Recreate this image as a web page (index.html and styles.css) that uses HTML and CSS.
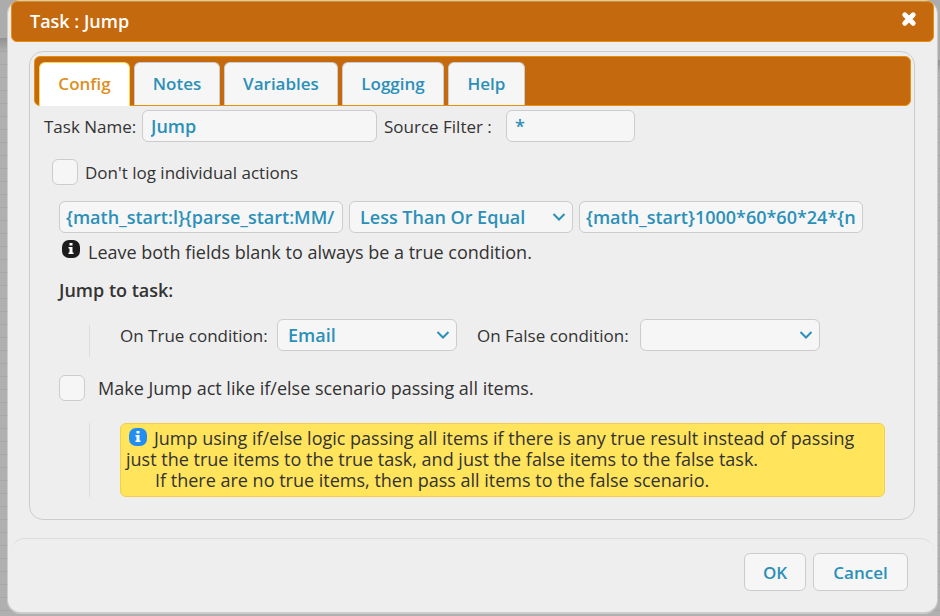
FILE: index.html
```html
<!DOCTYPE html>
<html lang="en">
<head>
<meta charset="utf-8">
<title>Task : Jump</title>
<link rel="stylesheet" href="styles.css">
</head>
<body>
<main class="dialog" role="dialog" aria-labelledby="dialog-title">
  <header class="titlebar">
    <h1 id="dialog-title">Task : Jump</h1>
    <button class="close" type="button" aria-label="Close">
      <svg viewBox="0 0 16 16" width="16" height="16"><path d="M3.800 3.800 12.200 12.200M12.200 3.800 3.800 12.200"/></svg>
    </button>
  </header>
  <form class="content" id="task-form">
    <div class="tabs">
      <nav class="tab-nav">
        <a class="tab tab-active" href="#config">Config</a>
        <a class="tab tab-notes" href="#notes">Notes</a>
        <a class="tab tab-variables" href="#variables">Variables</a>
        <a class="tab tab-logging" href="#logging">Logging</a>
        <a class="tab tab-help" href="#help">Help</a>
      </nav>
      <section class="panel" id="config">
        <div class="row names">
          <label for="task-name">Task Name:</label>
          <input class="field" id="task-name" type="text" value="Jump">
          <label for="source-filter">Source Filter :</label>
          <input class="field" id="source-filter" type="text" value="*">
        </div>
        <div class="row check check-log">
          <input id="no-log" type="checkbox">
          <label for="no-log">Don't log individual actions</label>
        </div>
        <div class="row expression">
          <input class="field" type="text" aria-label="Left value" value="{math_start:l}{parse_start:MM/">
          <span class="select">
            <select class="field" aria-label="Comparison"><option>Less Than Or Equal</option></select>
            <svg viewBox="0 0 14 10" width="14" height="10"><path d="M1.500 2 7 7.500 12.500 2"/></svg>
          </span>
          <input class="field" type="text" aria-label="Right value" value="{math_start}1000*60*60*24*{now}">
        </div>
        <p class="hint">
          <svg class="info info-dark" viewBox="0 0 18 18" width="18" height="18"><rect width="18" height="18" rx="7"/><path d="M7.500 3h3v2.500h-3zM6.500 7h4v5.500h1V14h-5v-1.500h1v-4h-1z"/></svg>
          <span>Leave both fields blank to always be a true condition.</span>
        </p>
        <h2>Jump to task:</h2>
        <div class="nested targets">
          <label for="on-true">On True condition:</label>
          <span class="select">
            <select class="field" id="on-true"><option>Email</option></select>
            <svg viewBox="0 0 14 10" width="14" height="10"><path d="M1.500 2 7 7.500 12.500 2"/></svg>
          </span>
          <label for="on-false">On False condition:</label>
          <span class="select">
            <select class="field" id="on-false"><option></option></select>
            <svg viewBox="0 0 14 10" width="14" height="10"><path d="M1.500 2 7 7.500 12.500 2"/></svg>
          </span>
        </div>
        <div class="row check check-else">
          <input id="if-else" type="checkbox">
          <label for="if-else">Make Jump act like if/else scenario passing all items.</label>
        </div>
        <div class="nested">
          <p class="notice"><svg class="info info-blue" viewBox="0 0 18 18" width="18" height="18"><rect width="18" height="18" rx="7"/><path d="M7.500 3h3v2.500h-3zM6.500 7h4v5.500h1V14h-5v-1.500h1v-4h-1z"/></svg>Jump using if/else logic passing all items if there is any true result instead of passing<br>just the true items to the true task, and just the false items to the false task.<br><span class="indent">If there are no true items, then pass all items to the false scenario.</span></p>
        </div>
      </section>
    </div>
  </form>
  <footer class="actions">
    <button class="button" type="submit" form="task-form">OK</button>
    <button class="button button-cancel" type="button">Cancel</button>
  </footer>
</main>
</body>
</html>
```
FILE: styles.css
```css
* { box-sizing: border-box; }

body {
  margin: 0;
  padding: 0 2px 2px 7px;
  min-height: 100vh;
  color: #333;
  font: 17px/21px "Trebuchet MS", "Open Sans", sans-serif;
  background:
    linear-gradient(#acacac, #acacac) left top / 50% 38px no-repeat,
    linear-gradient(#acacac, #acacac) right top / 50% 60px no-repeat,
    linear-gradient(#919191, #b0b0b000) 0 38px / 50% 14px no-repeat,
    linear-gradient(#919191, #b0b0b000) 100% 60px / 50% 14px no-repeat,
    repeating-linear-gradient(#b0b0b0 0 12px, #a6a6a6 12px 13px);
}

h1, h2, p { margin: 0; font-size: 18px; }
input, select, button { margin: 0; font: inherit; }
label { white-space: nowrap; }

.dialog {
  padding: 0 3px;
  border: 1px solid #ccc;
  border-bottom-width: 2px;
  border-radius: 14px;
  background: #eee;
}

.titlebar {
  display: flex;
  justify-content: space-between;
  height: 41px;
  padding: 0 16px 0 18px;
  border: 1px solid #e78f08;
  border-radius: 6px;
  background: #c4690d;
  color: #fff;
}
.titlebar h1 { line-height: 39px; font-weight: 600; }
.close { height: 34px; padding: 0; border: 0; background: none; }
.close svg { display: block; fill: none; stroke: #fff; stroke-width: 5; stroke-linecap: round; }

.content { padding: 9px 19px 18px 18px; }
.tabs {
  padding: 4px 3px 22px 4px;
  border: 1px solid #ccc;
  border-radius: 14px;
}
.tab-nav {
  display: flex;
  gap: 4px;
  height: 50px;
  padding: 5px 4px 0;
  border: 1px solid #e78f08;
  border-radius: 6px;
  background: #c4690d;
}
.tab {
  width: 86px;
  height: 43px;
  border: 1px solid #ccc;
  border-bottom: 0;
  border-radius: 6px 6px 0 0;
  background: #f6f6f6;
  color: #2b90b8;
  font-weight: 600;
  line-height: 41px;
  text-align: center;
  text-decoration: none;
}
.tab-active { width: 91px; height: 44px; border-color: #fbd850; background: #fff; color: #dd9020; }
.tab-variables { width: 114px; }
.tab-logging { width: 102px; }
.tab-help { width: 77px; }

.panel { padding: 4px 26px 0 10px; }
.row { display: flex; align-items: center; }

.field {
  width: 100%;
  height: 32px;
  padding: 0 8px;
  border: 1px solid #ccc;
  border-radius: 6px;
  background: #f6f6f6;
  color: #2b90b8;
  font-size: 18px;
  font-weight: 600;
}
.select { display: grid; align-items: center; }
.select > * { grid-area: 1 / 1; }
.select .field { appearance: none; padding: 0 10px; }
.select svg {
  justify-self: end;
  margin-right: 7px;
  fill: none;
  stroke: #2b90b8;
  stroke-width: 2;
  pointer-events: none;
}

.names { display: grid; grid-template-columns: 98px 235px 129px 129px; }
.names label:nth-of-type(2) { padding-left: 7px; }

.check input {
  appearance: none;
  width: 26px;
  height: 26px;
  border: 1px solid #ccc;
  border-radius: 6px;
  background: #f6f6f6;
}
.check-log { gap: 7px; padding: 17px 0 16px 8px; }
.check-else { gap: 13px; padding: 18px 0 22px 15px; font-size: 18px; }

.expression { display: grid; grid-template-columns: 284px 224px 284px; gap: 6px; padding-left: 15px; }
.expression > .field { padding: 0 6px; }

.hint { display: flex; gap: 8px; padding: 7px 0 0 18px; }
.hint span { padding-top: 2px; }
.info path { fill: #fff; }
.info-dark rect { fill: #1c1c1c; }
.info-blue rect { fill: #228ef1; }

h2 { padding: 17px 0 18px 15px; font-weight: 600; }

.nested {
  margin-left: 45px;
  padding-left: 31px;
  background: linear-gradient(#ddd, #ddd) left bottom / 1px calc(100% - var(--rail-offset, 0px)) no-repeat;
}
.targets {
  --rail-offset: 6px;
  display: grid;
  grid-template-columns: 157px 180px 183px 180px;
  align-items: center;
  padding-bottom: 6px;
}
.targets label:nth-of-type(2) { padding-left: 20px; }

.notice {
  padding: 4px 5px 5px;
  border: 1px solid #f2cf4e;
  border-radius: 6px;
  background: #ffe45c;
  white-space: nowrap;
}
.notice svg { margin: 0 7px 0 3px; vertical-align: -1px; }
.notice .indent { padding-left: 29px; }

.actions {
  display: flex;
  justify-content: flex-end;
  gap: 7px;
  padding: 14px 26px 21px;
  border-top: 1px solid #ddd;
  border-radius: 14px;
}
.button {
  min-width: 62px;
  height: 38px;
  padding: 0 16px;
  border: 1px solid #ccc;
  border-radius: 6px;
  background: #f6f6f6;
  color: #2b90b8;
  font-weight: 600;
}
.button-cancel { min-width: 95px; }
```
